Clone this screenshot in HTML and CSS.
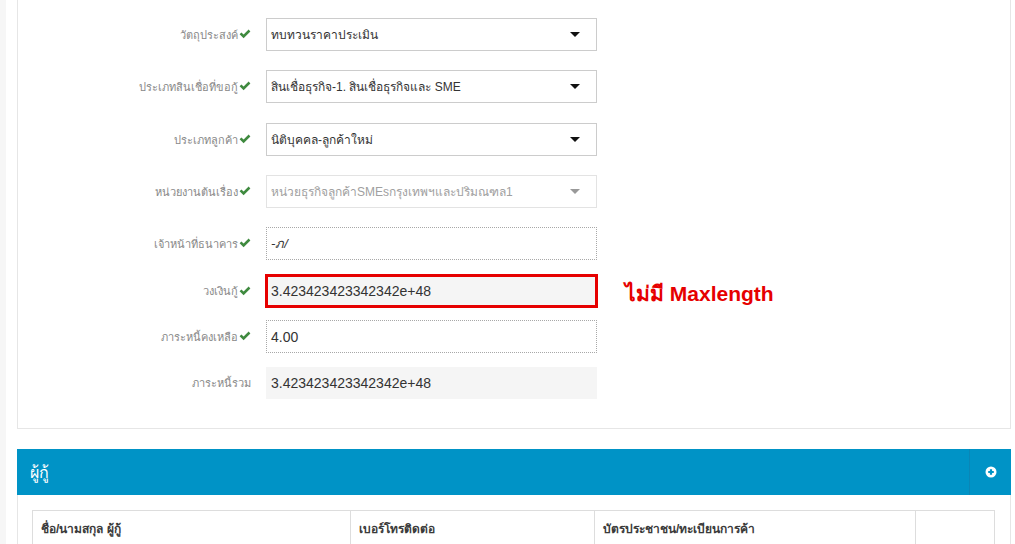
FILE: index.html
```html
<!DOCTYPE html>
<html lang="th">
<head>
<meta charset="utf-8">
<title>ฟอร์มสินเชื่อ</title>
<link rel="stylesheet" href="styles.css">
</head>
<body>
<div class="page">
  <div class="panel panel-form">
    <div class="form-row row-select">
      <label class="lbl">วัตถุประสงค์<svg class="ok" viewBox="0 0 12 10"><path d="M0.6 5.2 L2.4 3.4 L4.6 5.6 L9.6 0.6 L11.4 2.4 L4.6 9.2 Z"/></svg></label>
      <div class="select"><span>ทบทวนราคาประเมิน</span><i class="caret"></i></div>
    </div>
    <div class="form-row row-select">
      <label class="lbl">ประเภทสินเชื่อที่ขอกู้<svg class="ok" viewBox="0 0 12 10"><path d="M0.6 5.2 L2.4 3.4 L4.6 5.6 L9.6 0.6 L11.4 2.4 L4.6 9.2 Z"/></svg></label>
      <div class="select"><span>สินเชื่อธุรกิจ-1. สินเชื่อธุรกิจและ SME</span><i class="caret"></i></div>
    </div>
    <div class="form-row row-select">
      <label class="lbl">ประเภทลูกค้า<svg class="ok" viewBox="0 0 12 10"><path d="M0.6 5.2 L2.4 3.4 L4.6 5.6 L9.6 0.6 L11.4 2.4 L4.6 9.2 Z"/></svg></label>
      <div class="select"><span>นิติบุคคล-ลูกค้าใหม่</span><i class="caret"></i></div>
    </div>
    <div class="form-row row-select">
      <label class="lbl">หน่วยงานต้นเรื่อง<svg class="ok" viewBox="0 0 12 10"><path d="M0.6 5.2 L2.4 3.4 L4.6 5.6 L9.6 0.6 L11.4 2.4 L4.6 9.2 Z"/></svg></label>
      <div class="select disabled"><span>หน่วยธุรกิจลูกค้าSMEsกรุงเทพฯและปริมณฑล1</span><i class="caret"></i></div>
    </div>
    <div class="form-row row-text">
      <label class="lbl">เจ้าหน้าที่ธนาคาร<svg class="ok" viewBox="0 0 12 10"><path d="M0.6 5.2 L2.4 3.4 L4.6 5.6 L9.6 0.6 L11.4 2.4 L4.6 9.2 Z"/></svg></label>
      <div class="input dotted"><span class="thin">-ภ/</span></div>
    </div>
    <div class="form-row row-text row-marked">
      <label class="lbl">วงเงินกู้<svg class="ok" viewBox="0 0 12 10"><path d="M0.6 5.2 L2.4 3.4 L4.6 5.6 L9.6 0.6 L11.4 2.4 L4.6 9.2 Z"/></svg></label>
      <div class="input marked">3.423423423342342e+48</div>
      <div class="note">ไม่มี Maxlength</div>
    </div>
    <div class="form-row row-text">
      <label class="lbl">ภาระหนี้คงเหลือ<svg class="ok" viewBox="0 0 12 10"><path d="M0.6 5.2 L2.4 3.4 L4.6 5.6 L9.6 0.6 L11.4 2.4 L4.6 9.2 Z"/></svg></label>
      <div class="input dotted">4.00</div>
    </div>
    <div class="form-row row-last">
      <label class="lbl">ภาระหนี้รวม</label>
      <div class="input readonly">3.423423423342342e+48</div>
    </div>
  </div>

  <div class="panel panel-borrower">
    <div class="panel-head">
      <div class="panel-title">ผู้กู้</div>
      <div class="panel-tool">
        <svg class="plus" viewBox="0 0 12 12"><circle cx="6" cy="6" r="5.5"/><path d="M6 3.2 V8.8 M3.2 6 H8.8"/></svg>
      </div>
    </div>
    <div class="panel-body">
      <table class="grid">
        <thead>
          <tr>
            <th class="c1">ชื่อ/นามสกุล ผู้กู้</th>
            <th class="c2">เบอร์โทรติดต่อ</th>
            <th class="c3">บัตรประชาชน/ทะเบียนการค้า</th>
            <th class="c4"></th>
          </tr>
        </thead>
      </table>
    </div>
  </div>
</div>
</body>
</html>
```

FILE: styles.css
```css
html, body {
  margin: 0;
  padding: 0;
  background: #ffffff;
}

body {
  font-family: "Liberation Sans", Arial, sans-serif;
  color: #333;
  overflow: hidden;
  height: 544px;
}

.page {
  border-left: 6px solid #f6f6f6;
  padding-left: 11px;
  padding-right: 4px;
}

.panel {
  border: 1px solid #e6e6e6;
  background: #fff;
}

.panel-form {
  border-top: none;
  padding-top: 18px;
  padding-bottom: 29px;
}

.form-row {
  display: grid;
  grid-template-columns: 233px 331px auto;
  grid-template-rows: 33px;
  height: 33px;
  column-gap: 15px;
  align-items: center;
}

.row-select { margin-bottom: 19px; }
.row-select:nth-child(2) { margin-bottom: 20px; }
.row-text { margin-bottom: 14px; }
.row-marked {
  height: 34px;
  grid-template-rows: 34px;
  margin-bottom: 12px;
}
.row-last {
  height: 32px;
  grid-template-rows: 32px;
}

.lbl {
  text-align: right;
  font-size: 11px;
  line-height: 14px;
  color: #888;
  display: flex;
  justify-content: flex-end;
  align-items: center;
  gap: 1px;
}

.ok {
  width: 12px;
  height: 10px;
  fill: #3f8a3f;
  margin-top: -1px;
}

.select, .input {
  box-sizing: border-box;
  height: 33px;
  display: flex;
  align-items: center;
  font-size: 14px;
  line-height: 18px;
  color: #333;
  padding-left: 4px;
  background: #fff;
}

.select {
  border: 1px solid #cccccc;
  justify-content: space-between;
  padding-right: 16px;
  font-size: 12px;
}

.caret {
  width: 0;
  height: 0;
  border-left: 5px solid transparent;
  border-right: 5px solid transparent;
  border-top: 5px solid #111;
  margin-top: -1px;
}

.select.disabled {
  border-color: #e3e3e3;
  color: #a0a0a0;
}

.select.disabled .caret {
  border-top-color: #999;
}

.input.dotted {
  border: 1px dotted #a8a8a8;
}

.thin {
  font-style: italic;
  font-size: 13px;
}

.input.marked {
  height: 34px;
  margin-left: -1px;
  margin-right: -1px;
  border: 3px solid #e60000;
  background: #f5f5f5;
  padding-left: 3px;
}

.input.readonly {
  border: none;
  background: #f5f5f5;
  height: 32px;
  padding-left: 5px;
}

.note {
  margin-left: 13px;
  margin-top: 5px;
  color: #e60000;
  font-weight: bold;
  font-size: 21px;
  line-height: 24px;
}

.panel-borrower {
  margin-top: 20px;
  border-top: none;
  height: 100px;
}

.panel-head {
  display: flex;
  height: 46px;
  background: #0093c6;
  margin: 0 -1px;
}

.panel-title {
  flex: 1;
  display: flex;
  align-items: center;
  padding-left: 13px;
  color: #fff;
  font-size: 16px;
}

.panel-tool {
  width: 41px;
  border-left: 1px solid #0a86b6;
  display: flex;
  align-items: center;
  justify-content: center;
}

.plus {
  width: 12px;
  height: 12px;
}

.plus circle { fill: #fff; }
.plus path { stroke: #0093c6; stroke-width: 2.2; fill: none; }

.panel-body {
  padding: 15px 15px 0 14px;
}

.grid {
  width: 100%;
  border-collapse: collapse;
}

.grid th {
  border: 1px solid #dddddd;
  text-align: left;
  font-weight: bold;
  font-size: 12px;
  color: #3a3a3a;
  height: 34px;
  padding: 0 8px;
  vertical-align: middle;
}

.grid .c1 { width: 301px; }
.grid .c2 { width: 227px; }
.grid .c3 { width: 304px; }
```
